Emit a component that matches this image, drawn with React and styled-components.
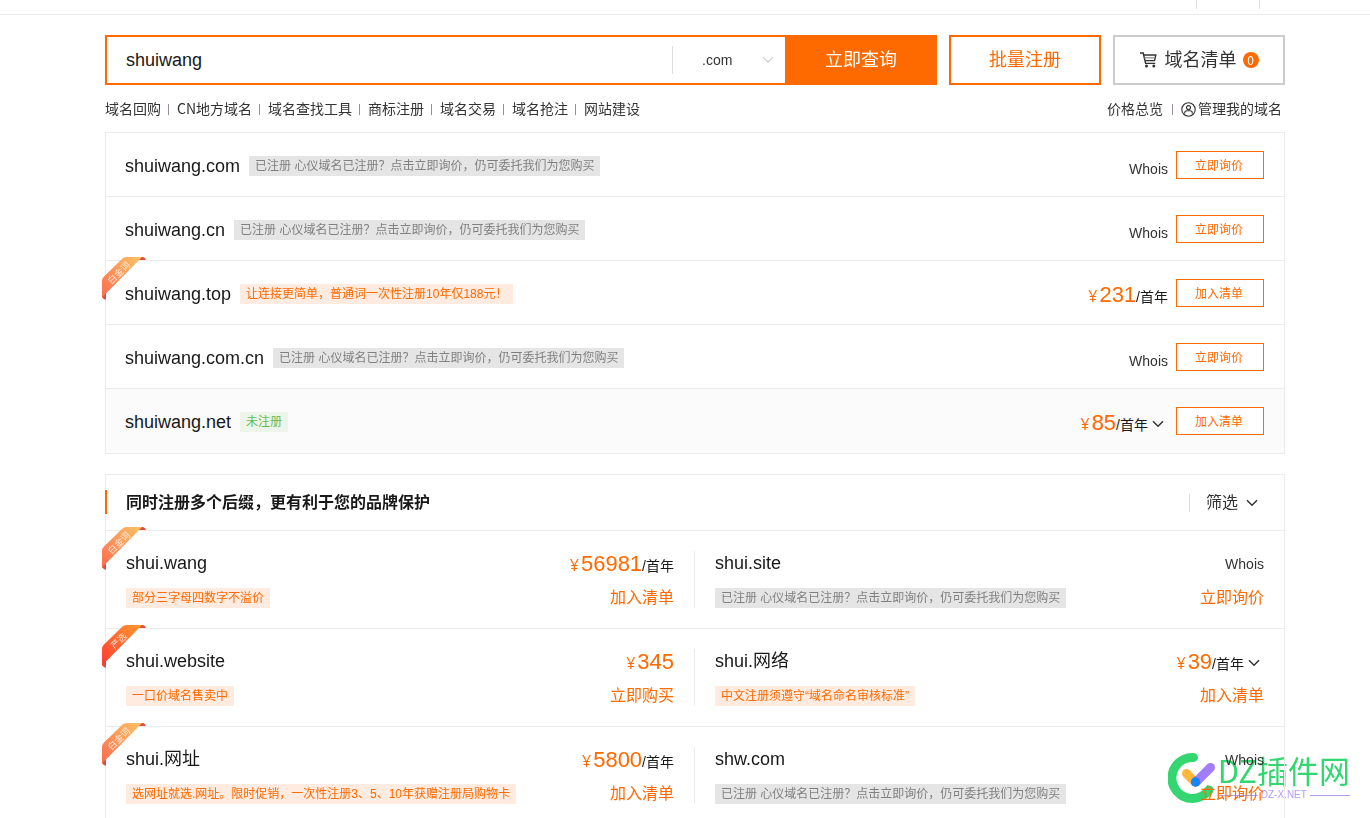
import React, { useState } from 'react';
import styled, { createGlobalStyle } from 'styled-components';

const ORANGE = '#ff6a00';
const LINE = '#ebebeb';
const CJK = '"Noto Sans CJK SC", "Noto Sans", sans-serif';
const LATIN = '"Liberation Sans", "Noto Sans CJK SC", sans-serif';

const GlobalStyle = createGlobalStyle`
  * {
    box-sizing: border-box;
  }
  body {
    margin: 0;
    background: #fff;
    color: #181818;
    font-family: ${LATIN};
    font-size: 14px;
  }
  a {
    color: inherit;
    text-decoration: none;
  }
  ul {
    list-style: none;
    margin: 0;
    padding: 0;
  }
  button, input, select {
    font-family: inherit;
    border-radius: 0;
    margin: 0;
  }
`

const TopBar = styled.header`
  display: flex;
  justify-content: flex-end;
  gap: 62px;
  height: 15px;
  padding-right: 110px;
  border-bottom: 1px solid ${LINE};
`
const Tick = styled.span`
  width: 1px;
  height: 9px;
  background: #ddd;
`
const Main = styled.main`
  padding: 20px 85px 0 105px;
`
const SearchRow = styled.div`
  display: flex;
  gap: 12px;
  height: 50px;
`
const SearchForm = styled.form`
  display: flex;
  flex: 1;
  border: 2px solid ${ORANGE};
  border-right: 0;
`
const SearchInput = styled.input`
  flex: 1;
  min-width: 0;
  border: 0;
  outline: 0;
  padding: 0 19px;
  color: #181818;
  font-size: 18px;
`
const SuffixBox = styled.div`
  display: flex;
  align-items: center;
  position: relative;
  width: 113px;
  height: 28px;
  margin-top: 9px;
  border-left: 1px solid #ddd;
  svg {
    position: absolute;
    right: 11px;
    pointer-events: none;
  }
`
const SuffixSelect = styled.select`
  appearance: none;
  width: 100%;
  height: 28px;
  padding: 0 0 0 29px;
  border: 0;
  outline: 0;
  background: none;
  color: #333;
  font-size: 14px;
`
const QueryButton = styled.button`
  width: 152px;
  margin: -2px 0;
  padding: 0 0 4px;
  border: 0;
  background: ${ORANGE};
  color: #fff;
  font-size: 18px;
`
const BoxButton = styled.button`
  display: flex;
  align-items: center;
  justify-content: center;
  width: ${props => props.$cart ? '172px' : '152px'};
  padding: 0;
  border: 2px solid ${props => props.$cart ? '#ccc' : ORANGE};
  background: #fff;
  color: ${props => props.$cart ? '#333' : ORANGE};
  font-size: 18px;
  svg {
    margin-right: 7px;
  }
`
const BoxLabel = styled.span`
  padding-bottom: 4px;
`
const Badge = styled.span`
  width: 16px;
  height: 16px;
  margin-left: 6px;
  border-radius: 8px;
  background: ${ORANGE};
  color: #fff;
  font: 12px/16px ${CJK};
`
const LinkRow = styled.nav`
  display: flex;
  justify-content: space-between;
  align-items: center;
  height: 47px;
  padding: 0 3px 2px 0;
  font-family: ${CJK};
  line-height: 20px;
  color: #333;
`
const LinkGroup = styled.ul`
  display: flex;
  gap: ${props => props.$wide ? '9px' : '7px'};
`
const LinkItem = styled.li`
  display: flex;
  align-items: center;
  &:not(:first-child)::before {
    content: '';
    width: 1px;
    height: 11px;
    margin: 3px 8px 0 0;
    background: #998f99;
  }
  a {
    display: flex;
    align-items: center;
    gap: 2px;
  }
  svg {
    margin-top: 3px;
  }
`
const Panel = styled.section`
  border: 1px solid ${LINE};
  margin-bottom: 20px;
`
const Ribbon = styled.svg`
  position: absolute;
  left: -4px;
  top: -4px;
`
const ResultRow = styled.li`
  display: flex;
  align-items: flex-start;
  position: relative;
  height: 64px;
  padding: 18px 20px 0 19px;
  border-bottom: 1px solid ${LINE};
  &:last-child {
    border-bottom: 0;
    background: #fbfbfb;
  }
`
const Name = styled.span`
  height: 30px;
  font-size: 18px;
  line-height: 30px;
`
const Tag = styled.span`
  height: 20px;
  padding: 0 6px;
  font-size: 12px;
  line-height: 20px;
  white-space: nowrap;
  color: ${props => tagColors[props.$kind][0]};
  background: ${props => tagColors[props.$kind][1]};
  ${ResultRow} & {
    margin: 5px 0 0 9px;
  }
`
const PriceBox = styled.div`
  display: flex;
  align-items: baseline;
  height: 30px;
  margin-left: auto;
  font-size: ${props => props.$small ? '18px' : '22px'};
  line-height: ${props => props.$small ? '30px' : '32px'};
  &::before {
    content: '\\200b';
  }
`
const Yen = styled.span`
  margin-right: 2px;
  color: ${ORANGE};
  font-family: "Open Sans", sans-serif;
  font-size: 16px;
  line-height: 20px;
`
const Amount = styled.span`
  color: ${ORANGE};
`
const Unit = styled.span`
  font-size: 14px;
  line-height: 20px;
`
const Whois = styled.a`
  color: #333;
  font-size: 14px;
  line-height: 20px;
`
const MoreButton = styled.button`
  display: flex;
  align-self: center;
  width: 20px;
  padding: 4px 4px 0;
  border: 0;
  background: none;
`
const RowButton = styled.button`
  width: 88px;
  height: 28px;
  margin-left: 8px;
  padding: 0 2px 2px 0;
  border: 1px solid ${ORANGE};
  background: #fff;
  color: ${ORANGE};
  font-size: 12px;
`
const PanelHead = styled.div`
  display: flex;
  align-items: center;
  justify-content: space-between;
  position: relative;
  height: 56px;
  padding: 0 20px;
  border-bottom: 1px solid ${LINE};
  &::before {
    content: '';
    position: absolute;
    left: -1px;
    top: 15px;
    width: 2px;
    height: 24px;
    background: ${ORANGE};
  }
`
const Title = styled.h2`
  margin: 0;
  font-size: 16px;
  line-height: 24px;
`
const FilterButton = styled.button`
  display: flex;
  align-items: center;
  gap: 8px;
  height: 18px;
  padding: 0 6px 0 16px;
  border: 0;
  border-left: 1px solid #ddd;
  background: none;
  color: #333;
  font-size: 16px;
  line-height: 16px;
`
const PairRow = styled.li`
  display: flex;
  position: relative;
  border-bottom: 1px solid ${LINE};
`
const Half = styled.div`
  display: flex;
  flex: 1 1 0;
  min-width: 0;
`
const Cell = styled.div`
  flex: 1;
  padding: 17px 20px 20px;
`
const CellLine = styled.div`
  display: flex;
  justify-content: space-between;
  & + & {
    margin-top: 10px;
  }
`
const Divider = styled.span`
  width: 1px;
  margin: 20px 0;
  background: ${LINE};
`
const TextAction = styled.button`
  height: 20px;
  margin-left: auto;
  padding: 0;
  border: 0;
  background: none;
  color: ${ORANGE};
  font-size: 16px;
  line-height: 20px;
`
const SiteMark = styled.div`
  display: flex;
  align-items: flex-start;
  position: fixed;
  right: 20px;
  bottom: 14px;
  z-index: -1;
`
const MarkText = styled.div`
  color: #33d670;
  font-family: ${CJK};
  font-size: 31px;
  line-height: 36px;
`
const MarkSub = styled.div`
  display: flex;
  align-items: center;
  gap: 3px;
  color: #b79cf5;
  font-size: 10px;
  line-height: 14px;
  &::before, &::after {
    content: '';
    flex: 1;
    height: 1px;
    background: #b79cf5;
  }
`

const tagColors = {
  taken: ['#808080', '#e5e5e5'],
  promo: [ORANGE, '#ffebdf'],
  free: ['#5fbb50', '#edf5eb'],
}

const TAKEN = '已注册 心仪域名已注册？点击立即询价，仍可委托我们为您购买';

const links = ['域名回购', 'CN地方域名', '域名查找工具', '商标注册', '域名交易', '域名抢注', '网站建设'];

const results = [
  { name: 'shuiwang.com', tag: TAKEN, kind: 'taken', action: '立即询价' },
  { name: 'shuiwang.cn', tag: TAKEN, kind: 'taken', action: '立即询价' },
  { name: 'shuiwang.top', tag: '让连接更简单，普通词一次性注册10年仅188元！', kind: 'promo', price: '231', unit: '/首年', action: '加入清单', ribbon: '白金词' },
  { name: 'shuiwang.com.cn', tag: TAKEN, kind: 'taken', action: '立即询价' },
  { name: 'shuiwang.net', tag: '未注册', kind: 'free', price: '85', unit: '/首年', more: true, action: '加入清单' },
];

const pairs = [
  [
    { name: 'shui.wang', tag: '部分三字母四数字不溢价', kind: 'promo', price: '56981', unit: '/首年', action: '加入清单', ribbon: '白金词' },
    { name: 'shui.site', tag: TAKEN, kind: 'taken', action: '立即询价' },
  ],
  [
    { name: 'shui.website', tag: '一口价域名售卖中', kind: 'promo', price: '345', action: '立即购买', ribbon: '严选' },
    { name: 'shui.网络', tag: '中文注册须遵守“域名命名审核标准”', kind: 'promo', price: '39', unit: '/首年', more: true, action: '加入清单' },
  ],
  [
    { name: 'shui.网址', tag: '选网址就选.网址。限时促销，一次性注册3、5、10年获赠注册局购物卡', kind: 'promo', price: '5800', unit: '/首年', action: '加入清单', ribbon: '白金词' },
    { name: 'shw.com', tag: TAKEN, kind: 'taken', action: '立即询价' },
  ],
];

const Chevron = ({ color = '#333', width = 1.5 }) => (
  <svg width="12" height="8" viewBox="0 0 12 8" fill="none" stroke={color} strokeWidth={width}>
    <path d="M1 1.2 6 6.2 11 1.2" />
  </svg>
)

const CartIcon = () => (
  <svg width="18" height="17" viewBox="0 0 18 17" fill="none" stroke="#333" strokeWidth="1.4">
    <path d="M0 1H3.200L5.600 11.400H15.200" />
    <path d="M3.600 3H15.800L14.500 8.600H5" />
    <path d="M4.600 5.800H14.800" stroke="#999" />
    <circle cx="6.500" cy="14" r="1.500" fill="#333" stroke="none" />
    <circle cx="13.800" cy="14" r="1.500" fill="#333" stroke="none" />
  </svg>
)

const UserIcon = () => (
  <svg width="15" height="15" viewBox="0 0 15 15" fill="none" stroke="#333" strokeWidth="1.1">
    <circle cx="7.5" cy="7.5" r="6.7" />
    <circle cx="7.5" cy="5.6" r="2" />
    <path d="M3.6 11.6V11a2.4 2.4 0 0 1 2.4-2.2H9A2.4 2.4 0 0 1 11.4 11v.6" />
  </svg>
)

const RibbonMark = ({ label, id }) => {
  const hot = label === '严选';
  return (
    <Ribbon width="45" height="44" viewBox="0 0 45 44">
      <defs>
        <linearGradient id={id} x1="0" y1="1" x2="1" y2="0">
          <stop offset="0" stopColor={hot ? '#ff3a34' : '#ff6b50'} />
          <stop offset="1" stopColor={hot ? '#ff9a2e' : '#fbc363'} />
        </linearGradient>
      </defs>
      <path d="M36 0H41Q43 .5 44 3H36ZM0 36H4V43Q1 42 0 40Z" fill="#dd4f3c" />
      <path d="M0 24Q0 21.500 2 19.500L20.500 1.500Q22 0 24.500 0H40L3 37.500Q1 39 0 41Z" fill={`url(#${id})`} />
      <text
        x="17"
        y="19"
        transform="rotate(-45 17 16)"
        textAnchor="middle"
        fontFamily={CJK}
        fontSize="9"
        fill="#fff"
        fillOpacity="0.8"
      >
        {label}
      </text>
    </Ribbon>
  )
}

const Price = ({ item, small }) => {
  if (!item.price) {
    return (
      <PriceBox $small={small}>
        <Whois href="#whois">Whois</Whois>
      </PriceBox>
    )
  }
  return (
    <PriceBox>
      <Yen>¥</Yen>
      <Amount>{item.price}</Amount>
      {item.unit && <Unit>{item.unit}</Unit>}
      {item.more && <MoreButton type="button" aria-label="更多价格"><Chevron /></MoreButton>}
    </PriceBox>
  )
}

const PairCell = ({ item }) => (
  <Cell>
    <CellLine>
      <Name>{item.name}</Name>
      <Price item={item} small />
    </CellLine>
    <CellLine>
      <Tag $kind={item.kind}>{item.tag}</Tag>
      <TextAction type="button">{item.action}</TextAction>
    </CellLine>
  </Cell>
)

const App = () => {
  const [keyword, setKeyword] = useState('shuiwang');

  return (
    <>
      <GlobalStyle />
      <TopBar>
        <Tick />
        <Tick />
      </TopBar>
      <Main>
        <SearchRow>
          <SearchForm onSubmit={e => e.preventDefault()}>
            <SearchInput aria-label="域名" value={keyword} onChange={e => setKeyword(e.target.value)} />
            <SuffixBox>
              <SuffixSelect aria-label="后缀" defaultValue=".com">
                <option>.com</option>
                <option>.cn</option>
                <option>.net</option>
              </SuffixSelect>
              <Chevron color="#ccc" width={1.2} />
            </SuffixBox>
            <QueryButton type="submit">立即查询</QueryButton>
          </SearchForm>
          <BoxButton type="button">
            <BoxLabel>批量注册</BoxLabel>
          </BoxButton>
          <BoxButton type="button" $cart>
            <CartIcon />
            <BoxLabel>域名清单</BoxLabel>
            <Badge>0</Badge>
          </BoxButton>
        </SearchRow>

        <LinkRow>
          <LinkGroup>
            {links.map(text => (
              <LinkItem key={text}><a href="#link">{text}</a></LinkItem>
            ))}
          </LinkGroup>
          <LinkGroup $wide>
            <LinkItem><a href="#price">价格总览</a></LinkItem>
            <LinkItem><a href="#manage"><UserIcon />管理我的域名</a></LinkItem>
          </LinkGroup>
        </LinkRow>

        <Panel>
          <ul>
            {results.map(item => (
              <ResultRow key={item.name}>
                {item.ribbon && <RibbonMark label={item.ribbon} id="ribbon-top" />}
                <Name>{item.name}</Name>
                <Tag $kind={item.kind}>{item.tag}</Tag>
                <Price item={item} />
                <RowButton type="button">{item.action}</RowButton>
              </ResultRow>
            ))}
          </ul>
        </Panel>

        <Panel>
          <PanelHead>
            <Title>同时注册多个后缀，更有利于您的品牌保护</Title>
            <FilterButton type="button">筛选<Chevron /></FilterButton>
          </PanelHead>
          <ul>
            {pairs.map(([left, right], i) => (
              <PairRow key={left.name}>
                {left.ribbon && <RibbonMark label={left.ribbon} id={`ribbon-${i}`} />}
                <Half>
                  <PairCell item={left} />
                  <Divider />
                </Half>
                <Half>
                  <PairCell item={right} />
                </Half>
              </PairRow>
            ))}
          </ul>
        </Panel>
      </Main>

      <SiteMark>
        <svg width="50" height="52" viewBox="0 0 50 52" fill="none" strokeLinecap="round">
          <path d="M25.500 5.500A20.500 20.500 0 1 0 41 38" stroke="#33d670" strokeWidth="9" />
          <path d="M18.500 21.500 27 30" stroke="#ffb83d" strokeWidth="9" />
          <path d="M42.500 15.500 28 30" stroke="#a27dfb" strokeWidth="9" />
          <circle cx="27.500" cy="30" r="4.700" fill="#1684fc" />
        </svg>
        <div>
          <MarkText>DZ插件网</MarkText>
          <MarkSub>DZ-X.NET</MarkSub>
        </div>
      </SiteMark>
    </>
  )
}

export default App;
